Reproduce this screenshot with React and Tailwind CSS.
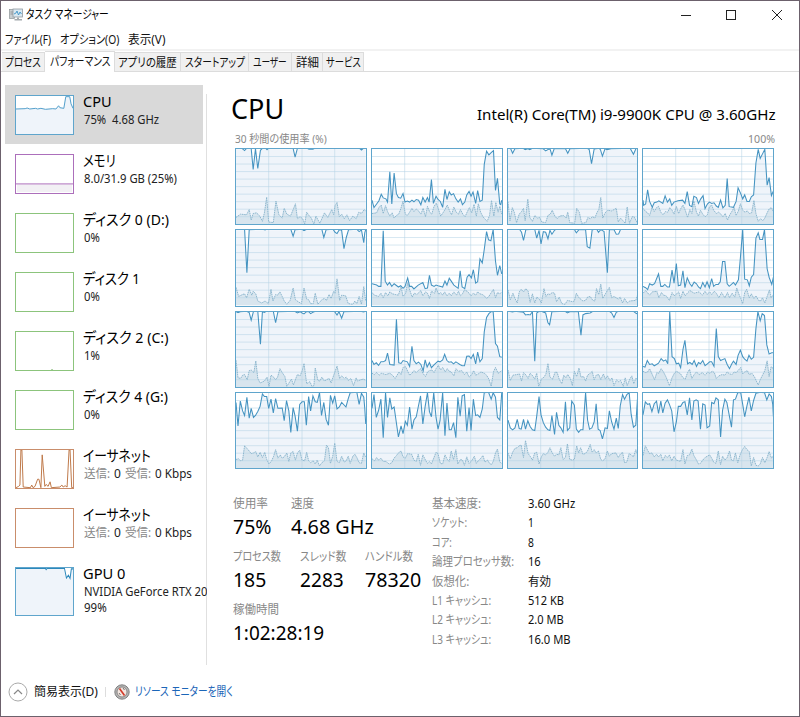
import { useLayoutEffect, useRef, useState } from "react";
import clsx from "clsx";

const TABS = [
  { label: "プロセス", width: 36, tab: "w-[43px]" },
  { label: "パフォーマンス", width: 60, tab: "w-[70px]", active: true },
  { label: "アプリの履歴", width: 59, tab: "w-[66px]" },
  { label: "スタートアップ", width: 60, tab: "w-[68px]" },
  { label: "ユーザー", width: 34, tab: "w-[43px]" },
  { label: "詳細", width: 23, tab: "w-[31px]" },
  { label: "サービス", width: 35, tab: "w-[41px]" },
];

const DETAILS = [
  ["基本速度:", 49, "3.60 GHz", 47],
  ["ソケット:", 35, "1", 6],
  ["コア:", 20, "8", 6],
  ["論理プロセッサ数:", 82, "16", 13],
  ["仮想化:", 37, "有効", 23],
  ["L1 キャッシュ:", 59, "512 KB", 36],
  ["L2 キャッシュ:", 59, "2.0 MB", 36],
  ["L3 キャッシュ:", 59, "16.0 MB", 43],
];

// One entry per logical processor: plot origin, total usage, kernel time
const CORES = [
  {
    x: 22,
    y: 190,
    usage:
      "22,191 40,191 48,198 54,191 68,191 74,256 81,192 88,253 96,197 102,191 112,191 116,195 120,191 195,191 201,218 208,191 238,191 243,194 255,194 260,191 396,191 402,196 408,191 415,191",
    kernel:
      "22,400 36,390 54,392 62,376 68,408 74,388 84,386 94,396 102,412 108,386 115,338 121,414 135,416 143,350 152,392 162,402 168,372 176,390 187,396 196,374 202,358 208,404 216,398 224,404 230,420 236,384 243,394 250,402 258,420 264,396 276,418 290,386 300,400 312,376 318,392 322,364 328,354 335,398 342,390 350,404 358,392 366,410 376,396 386,404 394,384 402,388 410,376 415,380",
  },
  {
    x: 428,
    y: 190,
    usage:
      "428,350 434,373 442,362 449,352 456,332 462,343 470,346 475,356 482,263 488,362 495,267 502,330 508,342 515,344 522,330 528,356 535,353 542,356 549,350 555,355 562,348 569,350 576,364 582,342 589,356 596,342 601,356 608,287 614,360 622,338 628,348 635,354 642,372 649,317 655,348 662,324 668,334 675,330 682,346 689,356 696,346 702,364 709,356 715,334 722,323 728,338 734,325 742,360 748,321 755,354 762,350 768,240 775,200 782,211 789,204 796,198 802,320 808,283 815,362 818,364 821,350",
    kernel:
      "428,388 442,386 449,370 456,362 462,388 469,364 475,382 482,396 489,386 495,402 502,394 509,390 515,374 522,350 529,390 535,394 542,384 549,372 555,382 562,374 569,380 576,390 583,372 590,398 596,366 603,384 609,390 616,366 623,356 629,374 636,396 643,386 649,376 656,362 663,380 669,392 676,368 683,384 690,390 696,376 703,390 710,398 716,384 723,370 730,386 737,360 744,396 750,358 757,384 764,398 771,406 777,412 784,394 790,348 797,396 803,354 810,384 815,366 821,390",
  },
  {
    x: 506,
    y: 190,
    usage:
      "506,191 514,192 520,206 527,192 552,191 558,195 566,192 572,195 580,191 612,192 620,199 630,193 634,195 639,212 646,192 680,192 687,206 694,192 746,191 752,195 759,238 767,193 782,191 786,195 792,215 800,192 806,195 818,192 876,191 886,209 894,191 899,191",
    kernel:
      "506,352 512,410 519,370 525,384 532,416 540,390 547,382 553,372 558,410 566,344 572,400 580,412 587,394 595,402 602,400 608,414 620,416 627,394 634,390 640,378 648,396 655,404 662,396 674,394 682,402 687,384 693,416 708,418 714,372 722,384 729,418 742,416 748,400 755,404 762,398 769,402 776,384 781,376 787,339 793,402 800,386 808,378 820,380 834,372 840,414 847,402 854,410 861,418 867,368 874,418 882,398 888,398 896,414 899,418",
  },
  {
    x: 426,
    y: 190,
    usage:
      "426,350 428,366 434,362 440,318 446,354 454,372 460,358 468,356 474,352 486,360 493,337 500,356 507,346 513,366 520,356 532,352 546,350 553,360 560,324 567,366 574,370 580,338 588,342 594,360 601,346 608,336 614,376 621,362 627,356 634,360 641,358 648,368 654,372 661,350 668,374 675,366 681,284 687,370 700,372 708,354 714,312 722,330 728,346 734,334 741,354 748,354 754,340 761,334 768,236 775,194 781,222 788,208 795,194 802,304 808,281 815,336 821,322",
    kernel:
      "426,372 434,382 440,386 446,394 454,368 460,382 467,370 473,366 480,384 487,392 494,382 501,384 507,370 514,378 520,390 527,366 534,388 540,374 547,362 554,378 561,400 568,376 574,388 580,350 588,384 594,396 600,378 607,390 614,398 621,392 627,368 634,362 640,378 648,388 655,384 662,390 668,398 675,388 682,408 689,392 695,382 702,370 708,394 715,380 721,358 728,378 735,384 742,380 748,388 755,386 762,348 768,388 775,412 782,404 789,410 795,402 802,386 808,374 815,370 821,382",
  },
  {
    x: 22,
    y: 12,
    usage:
      "22,13 48,13 55,146 62,14 104,13 110,15 114,13 188,13 195,34 201,14 222,13 228,17 236,13 282,13 288,38 295,14 316,13 322,22 328,26 335,14 342,16 349,72 356,38 363,14 388,13 395,20 402,15 409,54 412,24 415,13",
    kernel:
      "22,188 30,216 42,210 48,208 54,220 62,194 70,212 74,200 82,208 88,230 100,236 110,230 120,238 128,194 134,230 142,210 148,212 155,202 162,216 168,230 176,240 186,228 195,190 202,226 210,232 220,238 228,190 236,224 242,226 248,238 256,238 262,206 270,240 282,226 290,222 296,228 304,210 310,222 318,200 322,206 328,162 336,228 342,212 354,214 362,238 376,240 382,230 388,238 395,216 402,240 409,186 415,230",
  },
  {
    x: 428,
    y: 12,
    usage:
      "428,180 442,184 448,188 455,188 462,17 468,172 475,184 481,176 488,188 495,180 508,190 515,186 522,194 528,188 536,162 542,188 548,188 555,196 568,184 582,176 589,195 596,193 602,154 608,184 616,188 622,184 628,186 642,190 649,172 655,184 662,163 668,172 676,184 689,194 695,140 701,190 709,195 716,160 722,152 729,162 735,137 742,178 748,174 755,104 762,116 768,75 775,20 781,45 788,48 795,14 802,110 808,154 815,124 821,150",
    kernel:
      "428,204 435,212 448,216 455,206 462,220 469,204 476,214 482,202 490,208 498,210 508,212 516,186 522,216 530,206 536,174 542,196 550,218 556,206 564,210 576,198 582,214 590,202 596,206 602,222 608,200 618,206 622,190 630,210 636,204 642,212 648,202 655,214 662,206 668,214 676,202 684,212 690,200 696,214 702,208 708,196 716,200 722,206 728,214 735,206 742,212 748,202 755,208 762,210 768,214 775,222 782,216 788,206 796,194 802,220 808,204 815,208 821,202",
  },
  {
    x: 13,
    y: 12,
    usage:
      "13,13 48,13 54,22 60,47 67,14 94,13 100,40 107,16 113,58 120,20 127,22 134,42 140,16 146,28 154,16 158,13 214,13 220,24 228,14 248,14 253,66 261,71 268,14 282,13 287,22 294,14 304,20 314,146 320,14 334,14 341,28 348,27 354,13 406,13",
    kernel:
      "13,196 20,226 28,206 34,222 41,236 47,202 53,194 60,202 67,192 74,200 80,234 87,208 94,236 100,218 108,224 114,236 122,192 128,216 134,208 140,210 147,204 154,206 160,232 168,218 176,238 186,240 193,228 208,232 214,230 220,206 228,220 240,230 248,228 254,218 262,216 270,228 276,230 281,192 288,210 294,178 300,222 308,208 320,188 327,220 334,216 347,224 353,218 360,236 366,222 374,236 382,230 400,228 406,210",
  },
  {
    x: 420,
    y: 12,
    usage:
      "420,188 428,192 434,198 440,180 448,184 455,180 467,150 474,188 480,188 486,182 494,190 500,190 508,138 514,178 521,118 527,186 534,184 541,140 547,192 554,162 562,180 568,188 575,175 582,180 588,190 594,195 601,176 608,190 614,174 621,192 628,164 634,188 641,182 648,182 654,174 661,112 668,112 675,180 681,188 688,182 694,176 700,184 709,168 715,100 722,14 728,166 736,168 742,186 748,160 755,152 762,40 769,24 774,44 782,44 788,14 796,134 802,160 810,182 815,160",
    kernel:
      "420,206 428,198 440,212 448,202 462,200 468,220 476,204 482,212 490,214 500,228 508,204 514,214 522,208 528,202 534,222 541,200 548,214 554,206 562,198 575,206 590,202 600,212 608,200 614,210 622,202 628,210 636,200 642,206 650,220 658,204 668,220 676,204 682,220 690,206 698,218 704,190 710,208 716,222 722,238 728,204 734,194 742,220 748,208 756,222 762,214 770,228 776,230 782,220 789,236 796,216 803,196 808,220 815,210",
  },
  {
    x: 22,
    y: 256,
    usage:
      "22,258 28,261 35,258 54,257 62,261 68,284 75,257 88,257 96,358 102,258 108,260 114,257 135,257 142,292 149,258 200,257 208,262 216,258 222,262 228,265 236,258 242,258 248,264 255,260 262,257 320,257 328,268 334,258 342,278 349,258 400,257 408,259 415,257",
    kernel:
      "22,404 28,458 36,460 42,450 48,448 56,464 62,436 68,434 76,442 82,406 88,460 95,474 108,468 116,456 122,484 128,450 136,456 142,464 148,456 155,430 162,442 170,454 176,484 190,462 196,480 204,458 208,448 216,452 222,438 228,414 236,476 246,470 252,484 258,482 262,428 270,466 276,468 282,456 290,468 296,464 304,460 310,474 318,450 328,422 336,460 342,452 350,460 356,456 362,466 370,460 378,482 386,458 390,468 400,464 408,462 415,466",
  },
  {
    x: 428,
    y: 256,
    usage:
      "428,408 434,420 441,415 448,423 455,412 462,412 469,408 475,385 482,420 495,422 502,281 509,415 516,417 522,408 535,412 542,426 549,364 555,408 562,418 569,413 576,420 583,440 589,406 595,428 602,414 608,430 615,422 628,410 634,412 642,406 648,389 655,408 661,413 668,412 675,418 682,412 688,416 694,420 701,424 708,424 715,395 722,394 728,402 735,389 742,418 748,382 755,412 762,402 768,320 775,276 782,264 789,258 795,258 802,356 808,364 815,396 821,398",
    kernel:
      "428,444 435,448 442,442 450,450 456,444 470,448 482,444 490,450 498,460 504,450 510,440 516,448 522,426 530,424 536,438 542,450 549,444 555,436 562,442 570,434 576,430 582,444 590,454 596,440 602,436 610,434 616,442 622,430 629,420 636,434 642,426 650,440 656,430 662,438 668,440 676,452 682,430 690,438 700,436 708,448 715,440 722,456 730,448 736,436 742,450 750,446 758,440 768,444 775,450 782,462 789,484 796,440 802,426 810,444 821,436",
  },
  {
    x: 13,
    y: 256,
    usage:
      "13,256 26,259 36,257 60,260 66,268 74,267 80,268 87,258 94,410 100,262 106,258 114,257 127,262 134,292 139,298 146,258 186,257 193,262 200,258 226,258 234,330 240,268 248,264 262,262 270,257 320,257 327,262 334,276 341,260 347,257 393,257 402,264 406,262",
    kernel:
      "13,434 20,466 28,450 40,448 48,446 54,468 60,442 68,450 74,460 80,444 88,452 94,462 100,444 106,484 114,462 122,456 128,446 134,414 140,456 148,462 156,440 162,442 168,462 176,476 182,450 188,458 194,448 202,460 208,482 214,438 221,454 228,428 234,456 242,454 248,468 254,450 260,446 268,438 274,464 280,450 288,448 294,464 302,446 308,462 314,452 322,466 328,458 334,482 342,464 348,470 354,466 362,484 368,458 374,482 382,462 388,452 394,476 400,460 406,462",
  },
  {
    x: 420,
    y: 256,
    usage:
      "420,426 426,428 433,408 440,420 448,418 454,424 461,420 467,416 475,402 482,410 489,406 495,418 501,258 508,396 515,402 521,418 528,416 534,430 541,374 547,346 555,418 562,414 569,420 575,408 582,426 588,414 594,418 601,408 608,424 615,418 622,412 628,412 635,426 642,310 648,396 655,408 668,402 675,420 682,433 689,418 694,410 702,420 708,392 715,376 722,396 728,404 735,410 741,392 748,404 755,398 762,310 768,258 775,286 781,264 788,270 795,360 802,388 810,384 815,384",
    kernel:
      "420,438 428,442 434,440 440,430 448,448 455,464 462,442 468,444 475,430 482,440 490,456 500,482 508,458 515,444 521,438 528,442 534,446 541,458 548,462 555,442 561,432 568,460 575,448 582,440 590,448 600,442 608,450 616,440 622,444 630,438 636,442 642,460 650,452 660,448 668,450 675,440 682,446 690,448 696,440 702,442 708,436 716,426 722,446 728,440 736,436 742,448 750,444 758,456 769,480 775,464 782,450 789,436 796,406 802,454 808,424 815,430",
  },
  {
    x: 22,
    y: 22,
    usage:
      "22,54 28,126 35,50 42,80 48,94 55,38 62,102 68,72 75,100 81,94 88,82 95,66 102,28 108,36 115,36 121,72 128,44 135,86 142,42 149,72 162,71 168,110 175,48 182,80 188,146 195,70 201,96 208,142 215,60 222,52 229,52 235,124 242,36 248,80 255,34 262,52 268,54 275,24 281,94 288,54 295,106 302,124 308,32 315,56 321,34 328,74 335,68 342,54 355,68 362,42 368,24 388,23 395,60 402,26 409,38 412,72 415,120",
    kernel:
      "22,226 30,224 36,230 42,228 48,184 55,192 62,200 68,208 75,206 82,202 88,218 95,204 102,220 109,204 115,226 122,240 130,230 136,216 142,196 149,222 156,212 162,222 168,218 176,206 182,232 188,206 195,202 202,228 208,206 215,198 222,228 230,230 236,204 242,230 248,236 256,230 262,240 268,228 275,246 282,236 290,230 296,182 302,190 308,238 315,216 321,176 328,232 335,236 342,216 350,234 356,230 362,216 368,238 376,216 382,210 388,220 395,236 402,238 409,206 415,220",
  },
  {
    x: 428,
    y: 22,
    usage:
      "428,72 434,30 441,100 448,78 455,44 462,162 469,24 475,100 482,40 488,74 495,68 508,160 516,126 522,150 529,112 535,124 542,68 549,136 555,108 562,98 568,68 575,34 582,120 589,66 596,24 602,82 608,98 615,24 622,100 628,136 634,110 642,24 649,156 655,56 662,138 668,138 675,116 682,162 688,38 695,96 701,34 708,30 715,142 722,70 728,140 735,44 742,94 748,92 755,100 762,74 768,24 781,23 789,44 795,24 802,38 808,100 815,108 821,24",
    kernel:
      "428,224 436,230 442,220 448,228 455,222 462,232 470,232 480,240 488,236 495,222 502,214 508,206 516,200 522,218 529,222 536,208 548,210 555,228 562,232 568,210 575,244 582,212 590,228 596,238 602,232 608,240 615,222 622,204 628,208 635,238 642,240 649,212 656,226 662,232 668,200 675,226 682,196 688,240 696,226 702,228 708,244 715,218 722,238 730,230 738,216 744,238 750,230 758,222 764,214 770,234 778,228 784,238 790,242 796,230 802,206 808,194 815,234 821,238",
  },
  {
    x: 13,
    y: 22,
    usage:
      "13,108 20,132 27,138 34,132 41,106 47,134 53,136 60,106 66,136 73,110 80,128 87,138 94,140 100,96 107,36 113,92 120,116 127,130 134,138 140,140 146,94 154,152 160,84 167,124 173,132 180,146 187,52 193,140 200,132 206,50 214,62 220,136 227,146 233,138 240,138 248,24 254,108 260,136 267,132 274,114 280,58 286,136 292,140 299,166 307,132 314,134 320,80 327,114 334,136 341,102 347,134 353,64 360,30 366,44 373,30 380,24 386,90 393,130 400,124 406,30",
    kernel:
      "13,206 20,224 27,204 34,192 41,190 47,184 53,182 60,220 66,168 74,208 80,216 87,228 94,206 100,204 107,240 114,218 120,208 127,212 134,204 140,190 147,206 154,216 160,210 167,212 173,190 180,226 187,220 193,178 200,226 208,228 214,226 221,184 227,206 233,190 240,210 247,208 254,200 262,180 268,204 274,196 280,206 287,200 294,226 300,230 307,224 314,200 320,216 327,208 340,206 347,220 353,210 360,204 366,236 373,234 380,208 386,212 393,218 400,196 406,212",
  },
  {
    x: 420,
    y: 22,
    usage:
      "420,92 427,52 434,60 440,58 447,82 454,58 461,50 467,88 474,50 480,86 487,56 494,46 500,60 507,80 514,144 521,114 527,66 534,66 541,54 547,52 554,92 561,40 568,108 574,50 581,46 587,50 594,136 601,58 608,62 614,132 622,126 628,54 635,58 641,40 648,46 655,160 661,78 668,44 674,54 681,92 688,130 694,46 700,44 707,24 716,24 722,60 728,98 735,64 741,38 748,80 755,48 762,26 775,23 788,24 795,46 802,28 809,36 813,60 815,98",
    kernel:
      "420,214 427,184 434,198 440,208 447,206 454,218 461,210 467,218 474,210 480,230 487,214 494,220 500,212 507,230 514,216 521,228 534,232 541,196 547,240 554,214 561,212 568,194 574,214 581,226 588,240 594,238 601,228 608,220 622,212 628,222 634,234 641,238 648,200 655,242 661,216 668,228 675,220 682,200 688,228 694,230 700,206 707,236 714,212 721,196 728,186 735,196 742,202 748,246 755,220 762,244 769,246 775,240 782,220 789,236 796,220 802,202 809,222 815,214",
  },
];

const GRID_X = [99, 200, 299];
const GRID_Y = [1, 2, 3, 4, 5, 6, 7, 8, 9];

// Draws a single line of text squeezed or stretched to the given width.
function Label({ width, className, children }) {
  const ref = useRef(null);
  const [scale, setScale] = useState(1);

  useLayoutEffect(() => {
    setScale(width / ref.current.offsetWidth);
  }, [width]);

  return (
    <span
      className={clsx("block shrink-0 whitespace-pre text-left", className)}
      style={{ width }}
    >
      <span
        ref={ref}
        className="inline-block origin-left"
        style={{ transform: `scaleX(${scale})` }}
      >
        {children}
      </span>
    </span>
  );
}

function CoreChart({ x, y, usage, kernel }) {
  const area = (line) => `${x},${y + 231} ${line} ${x + 393},${y + 231}`;

  return (
    <div className="min-h-0 min-w-0 border border-[#5fa5cc] bg-white">
      <svg
        className="block h-full w-full"
        viewBox={`${x} ${y} 393 231`}
        preserveAspectRatio="none"
      >
        <polygon points={area(usage)} fill="#eff4fa" />
        <polygon points={area(kernel)} fill="#d8e5ee" />
        <g stroke="#b4d3e5" strokeOpacity="0.55" strokeWidth="3">
          {GRID_X.map((v) => (
            <line key={v} x1={x + v} x2={x + v} y1={y} y2={y + 231} />
          ))}
          {GRID_Y.map((v) => (
            <line
              key={v}
              x1={x}
              x2={x + 393}
              y1={y + v * 23.1}
              y2={y + v * 23.1}
            />
          ))}
        </g>
        <polyline
          points={kernel}
          fill="none"
          stroke="#8db7ce"
          strokeWidth="3"
          strokeDasharray="5 2"
        />
        {/* lifted by a pixel so that full load merges with the frame */}
        <polyline
          points={usage}
          transform="translate(0 -3)"
          fill="none"
          stroke="#4493c1"
          strokeWidth="3.2"
        />
      </svg>
    </div>
  );
}

function Thumb({ className, children }) {
  return (
    <div className={clsx("w-[59px] shrink-0 border bg-white", className)}>
      <svg
        className="block h-full w-full"
        viewBox="0 0 174 117"
        preserveAspectRatio="none"
      >
        {children}
      </svg>
    </div>
  );
}

function SidebarItem({ selected, thumb, title, titleWidth, tall, children }) {
  return (
    <li
      className={clsx(
        "flex gap-[9px] pl-[10px] pt-[10px]",
        tall ? "h-[68px]" : "h-[59px]",
        selected && "w-[198px] bg-[#d9d9d9]"
      )}
    >
      {thumb}
      <div className="-mt-1 min-w-0">
        <Label width={titleWidth} className="text-[15px] leading-5 text-black">
          {title}
        </Label>
        {children}
      </div>
    </li>
  );
}

const SUB = "ml-px text-[12px] leading-[17px] text-[#222]";

function NetworkRate() {
  return (
    <div className="ml-px flex gap-1 text-[12px] leading-[17px] text-[#222]">
      <Label width={26} className="text-[#888]">
        送信:
      </Label>
      <Label width={7}>0</Label>
      <Label width={26} className="text-[#888]">
        受信:
      </Label>
      <Label width={37}>0 Kbps</Label>
    </div>
  );
}

function Sidebar() {
  const green = <Thumb className="h-10 border-[#8cc47c]" />;

  return (
    <ul className="w-[202px] shrink-0 overflow-hidden">
      <SidebarItem
        selected
        title="CPU"
        titleWidth={29}
        thumb={
          <Thumb className="h-10 border-[#5fa5cc]">
            <path
              d="M0 117V40L28 39L34 37L42 40L60 38L66 40L76 38L90 41L112 39L122 40L130 30L134 36L146 38L152 2H164L168 24L174 38V117Z"
              fill="#eff4fa"
            />
            <path
              d="M0 40L28 39L34 37L42 40L60 38L66 40L76 38L90 41L112 39L122 40L130 30L134 36L146 38L152 2H164L168 24L174 38"
              fill="none"
              stroke="#4f9dca"
              strokeWidth="3"
            />
          </Thumb>
        }
      >
        <Label width={75} className={SUB}>
          {"75%  4.68 GHz"}
        </Label>
      </SidebarItem>
      <SidebarItem
        title="メモリ"
        titleWidth={33}
        thumb={
          <Thumb className="h-10 border-[#ac6fbb]">
            <rect x="3" y="90" width="168" height="24" fill="#f2f0f4" />
            <path d="M0 89H174" stroke="#ac6fbb" strokeWidth="3" />
          </Thumb>
        }
      >
        <Label width={93} className={SUB}>
          8.0/31.9 GB (25%)
        </Label>
      </SidebarItem>
      <SidebarItem title="ディスク 0 (D:)" titleWidth={86} thumb={green}>
        <Label width={16} className={SUB}>
          0%
        </Label>
      </SidebarItem>
      <SidebarItem title="ディスク 1" titleWidth={57} thumb={green}>
        <Label width={16} className={SUB}>
          0%
        </Label>
      </SidebarItem>
      <SidebarItem
        title="ディスク 2 (C:)"
        titleWidth={85}
        thumb={
          <Thumb className="h-10 border-[#8cc47c]">
            <path d="M107 116H113" stroke="#6dab5c" strokeWidth="2" />
          </Thumb>
        }
      >
        <Label width={16} className={SUB}>
          1%
        </Label>
      </SidebarItem>
      <SidebarItem title="ディスク 4 (G:)" titleWidth={85} thumb={green}>
        <Label width={16} className={SUB}>
          0%
        </Label>
      </SidebarItem>
      <SidebarItem
        title="イーサネット"
        titleWidth={68}
        thumb={
          <Thumb className="h-10 border-[#c98d6b]">
            <path
              d="M0 116L8 112L12 108L15 0H18L22 114L44 116L48 108L52 116L58 112L66 90L70 90L76 116L80 15L88 112L92 106L98 112L104 98L108 116L134 114L140 108L144 114L150 110L156 114L162 0H165L170 116H174"
              fill="none"
              stroke="#bd7747"
              strokeWidth="3"
            />
          </Thumb>
        }
      >
        <NetworkRate />
      </SidebarItem>
      <SidebarItem
        title="イーサネット"
        titleWidth={68}
        thumb={<Thumb className="h-10 border-[#c98d6b]" />}
      >
        <NetworkRate />
      </SidebarItem>
      <SidebarItem
        tall
        title="GPU 0"
        titleWidth={42}
        thumb={
          <Thumb className="h-[49px] border-[#5fa5cc]">
            <path d="M0 0H146L154 24L160 16L166 24L170 2H174V117H0Z" fill="#eff4fa" />
            <path
              d="M0 1H90L92 4L95 1H148L154 25L160 18L165 26L169 2H174"
              fill="none"
              stroke="#2c88bb"
              strokeWidth="3"
            />
          </Thumb>
        }
      >
        <Label width={123} className={SUB}>
          NVIDIA GeForce RTX 20
        </Label>
        <Label width={23} className={clsx(SUB, "-mt-px")}>
          99%
        </Label>
      </SidebarItem>
    </ul>
  );
}

function Stat({ label, labelWidth, value, valueWidth, className }) {
  return (
    <div className={clsx("h-[53px] shrink-0", className)}>
      <Label width={labelWidth} className="text-[12px] leading-[18px] text-[#888]">
        {label}
      </Label>
      <Label width={valueWidth} className="text-[20px] leading-7 text-black">
        {value}
      </Label>
    </div>
  );
}

function Performance() {
  return (
    <section className="ml-[27px] w-[545px]">
      <div className="flex h-[46px] items-start justify-between pt-2">
        <Label
          width={53}
          className="-ml-1 text-[27px] leading-8 text-black"
        >
          CPU
        </Label>
        <Label
          width={299}
          className="mr-1 pt-[11px] text-[15px] leading-5 text-black"
        >
          Intel(R) Core(TM) i9-9900K CPU @ 3.60GHz
        </Label>
      </div>
      <div className="mb-px flex h-4 w-[540px] items-center justify-between text-[11px] leading-4 text-[#888]">
        <Label width={92}>30 秒間の使用率 (%)</Label>
        <Label width={27}>100%</Label>
      </div>
      <div className="grid h-[321px] w-[539px] grid-cols-4 grid-rows-4 gap-1">
        {CORES.map((core, i) => (
          <CoreChart key={i} {...core} />
        ))}
      </div>
      <div className="-ml-0.5 flex pt-[26px]">
        <div className="w-[199px]">
          <div className="flex">
            <Stat
              className="w-[58px]"
              label="使用率"
              labelWidth={35}
              value="75%"
              valueWidth={39}
            />
            <Stat label="速度" labelWidth={23} value="4.68 GHz" valueWidth={83} />
          </div>
          <div className="flex">
            <Stat
              className="w-[67px]"
              label="プロセス数"
              labelWidth={48}
              value="185"
              valueWidth={33}
            />
            <Stat
              className="w-[65px]"
              label="スレッド数"
              labelWidth={46}
              value="2283"
              valueWidth={44}
            />
            <Stat
              label="ハンドル数"
              labelWidth={48}
              value="78320"
              valueWidth={56}
            />
          </div>
          <Stat
            label="稼働時間"
            labelWidth={46}
            value="1:02:28:19"
            valueWidth={91}
          />
        </div>
        <dl className="text-[12px]">
          {DETAILS.map(([name, nameWidth, value, valueWidth]) => (
            <div key={name} className="flex h-[19.4px]">
              <dt className="w-24 text-[#888]">
                <Label width={nameWidth} className="leading-[18px]">
                  {name}
                </Label>
              </dt>
              <dd className="text-[#111]">
                <Label width={valueWidth} className="leading-[18px]">
                  {value}
                </Label>
              </dd>
            </div>
          ))}
        </dl>
      </div>
    </section>
  );
}

function TitleBar() {
  return (
    <header className="flex h-7 items-center pl-2">
      <svg width="14" height="14" viewBox="0 0 14 14">
        <rect x="0.5" y="1.5" width="5" height="9" fill="#c9ced1" stroke="#8d9498" strokeWidth="0.7" />
        <path d="M1.5 4H4M1.5 6H4" stroke="#7b8185" strokeWidth="0.7" />
        <rect x="4" y="1" width="9.5" height="8" fill="#d9e8f1" stroke="#929aa0" strokeWidth="0.8" />
        <path d="M5 6L7 5L8 3L9.5 7L11 4L12.5 6" fill="none" stroke="#3f94c6" strokeWidth="0.9" />
        <path d="M8 9.5H10V11H13V12.5H5.5V11H8Z" fill="#a4aaae" />
      </svg>
      <Label width={83} className="ml-[3px] text-[12px] leading-5 text-black">
        タスク マネージャー
      </Label>
      <svg
        className="ml-auto mr-4"
        width="103"
        height="12"
        viewBox="0 0 103 12"
        fill="none"
        stroke="#222"
      >
        <path d="M1 6.5H11" />
        <rect x="46.5" y="1.5" width="9" height="9" />
        <path d="M92 1L102 11M102 1L92 11" />
      </svg>
    </header>
  );
}

export default function App() {
  return (
    <div className="flex h-[717px] w-[800px] flex-col overflow-hidden border border-[#6c616c] bg-white font-['Noto_Sans','Noto_Sans_CJK_JP',sans-serif] [font-feature-settings:'palt']">
      <TitleBar />

      <nav className="flex h-5 gap-[9px] pl-1 pt-0.5 text-[12px] leading-[18px] text-[#111]">
        <Label width={46}>ファイル(F)</Label>
        <Label width={59}>オプション(O)</Label>
        <Label width={37}>表示(V)</Label>
      </nav>

      <div className="flex h-[23px] items-end border-t-2 border-[#f2f2f2]">
        <div className="w-px self-stretch border-b border-[#dcdcdc]" />
        {TABS.map((tab) => (
          <div
            key={tab.label}
            className={clsx(
              "flex shrink-0 justify-center border-r border-[#dcdcdc] text-[12px] text-[#111]",
              tab.tab,
              tab.active
                ? "h-[21px] border-t bg-white leading-[19px]"
                : "h-[20px] border-y bg-[#f0f0f0] leading-5"
            )}
          >
            <Label width={tab.width}>{tab.label}</Label>
          </div>
        ))}
        <div className="grow self-stretch border-b border-[#dcdcdc]" />
      </div>

      <div className="flex h-[593px] pl-1 pt-[13px]">
        <Sidebar />
        <div className="-ml-px mr-px mt-[9px] h-[571px] w-px shrink-0 bg-[#e0e0e0]" />
        <Performance />
      </div>

      <footer className="flex grow items-center pl-[7px] pt-[3px] text-[12px] text-[#111]">
        <svg width="20" height="20" viewBox="0 0 20 20" fill="none">
          <circle cx="10" cy="10" r="9" stroke="#aaa" />
          <path d="M6 12L10 8L14 12" stroke="#888" strokeWidth="1.2" />
        </svg>
        <Label width={64} className="ml-1.5">
          簡易表示(D)
        </Label>
        <div className="ml-[7px] h-[10px] w-px bg-[#ddd]" />
        <svg className="ml-2" width="16" height="16" viewBox="0 0 16 16">
          <circle cx="8" cy="8" r="7.2" fill="#b4b4b4" stroke="#777" strokeWidth="0.9" />
          <circle cx="8" cy="8" r="5" fill="#f3e6e0" stroke="#777" strokeWidth="0.8" />
          <path d="M5.5 4.5L10.5 11.5" stroke="#d33a28" strokeWidth="1.6" />
          <path d="M9 4L10.5 6M5 9L6.5 11" stroke="#555" strokeWidth="0.8" />
        </svg>
        <Label width={98} className="ml-[5px] text-[#1c66b8]">
          リソース モニターを開く
        </Label>
      </footer>
    </div>
  );
}
